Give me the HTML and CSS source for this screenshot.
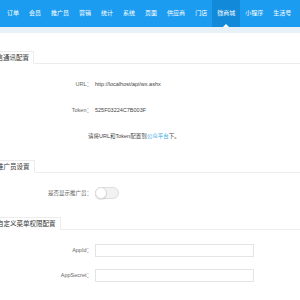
FILE: index.html
```html
<!DOCTYPE html>
<html>

<head>
    <meta name="viewport" content="width=device-width, initial-scale=1.0">
    <link rel="stylesheet" href="styles.css">
</head>

<body>
    <div class="top-nav">
        <a class="nav-item">订单</a>
        <a class="nav-item">会员</a>
        <a class="nav-item">推广员</a>
        <a class="nav-item">营销</a>
        <a class="nav-item">统计</a>
        <a class="nav-item">系统</a>
        <a class="nav-item">页面</a>
        <a class="nav-item">供应商</a>
        <a class="nav-item">门店</a>
        <a class="nav-item active">微商城</a>
        <a class="nav-item">小程序</a>
        <a class="nav-item">生活号</a>
    </div>
    <div class="sub-strip"></div>

    <div class="content">
        <div class="section-title first">
            <span class="tab wide">微信通讯配置</span>
        </div>
        <div class="form-row">
            <div class="label">URL：</div>
            <div class="value">http://localhost/api/wx.ashx</div>
        </div>
        <div class="form-row">
            <div class="label">Token：</div>
            <div class="value">525F03224C7B003F</div>
        </div>
        <div class="help-row">请将URL和Token配置到<a class="link">公众平台</a>下。</div>

        <div class="section-title">
            <span class="tab">推广员设置</span>
        </div>
        <div class="form-row">
            <div class="label">是否显示推广员：</div>
            <div class="value">
                <span class="switch"><span class="knob"></span></span>
            </div>
        </div>

        <div class="section-title">
            <span class="tab">自定义菜单权限配置</span>
        </div>
        <div class="form-row">
            <div class="label">AppId：</div>
            <div class="value"><input class="text-input" type="text"></div>
        </div>
        <div class="form-row tight">
            <div class="label">AppSecret：</div>
            <div class="value"><input class="text-input" type="text"></div>
        </div>
    </div>
</body>

</html>
```

FILE: styles.css
```css
* {
    box-sizing: border-box;
}

body {
    margin: 0;
    background-color: white;
    font-family: "Liberation Sans", "Noto Sans CJK SC", sans-serif;
    overflow: hidden;
}

.top-nav {
    display: flex;
    height: 27px;
    padding-left: 2px;
    background-color: #1b9cf0;
}

.nav-item {
    position: relative;
    padding: 0 5px;
    line-height: 27px;
    font-size: 6px;
    color: white;
    white-space: nowrap;
}

    .nav-item.active {
        background-color: #1289d9;
    }

    .nav-item.active::after {
        content: "";
        position: absolute;
        left: 50%;
        bottom: 0;
        margin-left: -3px;
        border-left: 3px solid transparent;
        border-right: 3px solid transparent;
        border-bottom: 3px solid white;
    }

.sub-strip {
    height: 6px;
    background-color: #e9f1f8;
}

.section-title {
    display: flex;
    margin-top: 16px;
    margin-left: -8px;
    border-bottom: 1px solid #ececec;
}

    .section-title.first {
        margin-top: 18px;
    }

.tab {
    display: block;
    height: 13px;
    margin-bottom: -1px;
    padding: 0 4px;
    line-height: 12px;
    font-size: 6.5px;
    color: #333;
    background-color: white;
    border: 1px solid #ececec;
    border-bottom-color: white;
    white-space: nowrap;
}

    .tab.wide {
        margin-left: -7px;
    }

.form-row {
    display: grid;
    grid-template-columns: 92px 1fr;
    column-gap: 3px;
    height: 16px;
    margin-top: 10px;
    align-items: center;
    font-size: 5.5px;
}

    .section-title + .form-row {
        margin-top: 12px;
    }

    .form-row.tight {
        margin-top: 9px;
    }

.label {
    text-align: right;
    color: #666;
}

.value {
    display: flex;
    align-items: center;
    color: #444;
}

.help-row {
    height: 16px;
    margin-top: 10px;
    padding-left: 88px;
    line-height: 16px;
    font-size: 5.5px;
    color: #444;
}

.link {
    color: #36a8e6;
}

.switch {
    position: relative;
    display: block;
    width: 24px;
    height: 12px;
    border: 1px solid #dedede;
    border-radius: 6px;
    background-color: #f2f2f2;
}

.knob {
    position: absolute;
    top: -1px;
    left: -1px;
    width: 12px;
    height: 12px;
    border-radius: 50%;
    background-color: white;
    border: 1px solid #dcdcdc;
    box-shadow: 0 1px 1px rgba(0, 0, 0, 0.12);
}

.text-input {
    display: block;
    width: 159px;
    height: 13px;
    margin: 0;
    padding: 0 3px;
    border: 1px solid #e4e4e4;
    background-color: white;
    font-size: 5.5px;
}
```
